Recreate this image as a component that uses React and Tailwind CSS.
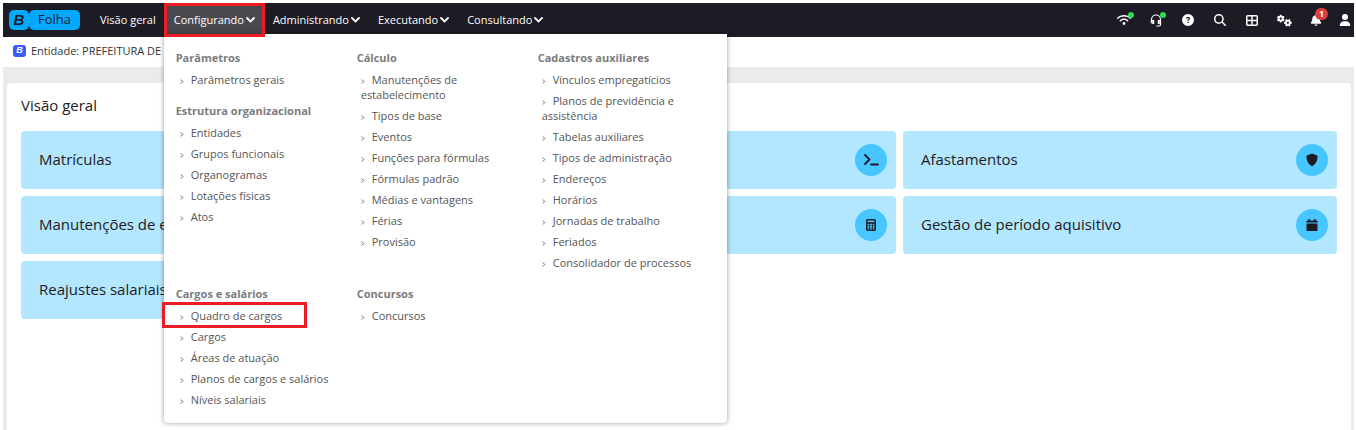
import { FaWifi, FaCircleQuestion, FaMagnifyingGlass, FaGears, FaBell, FaUser } from 'react-icons/fa6'

const menuColumns = [
  // first row
  [
    { title: 'Parâmetros', items: ['Parâmetros gerais'] },
    {
      title: 'Estrutura organizacional',
      items: ['Entidades', 'Grupos funcionais', 'Organogramas', 'Lotações físicas', 'Atos'],
    },
  ],
  [
    {
      title: 'Cálculo',
      items: [
        'Manutenções de estabelecimento',
        'Tipos de base',
        'Eventos',
        'Funções para fórmulas',
        'Fórmulas padrão',
        'Médias e vantagens',
        'Férias',
        'Provisão',
      ],
    },
  ],
  [
    {
      title: 'Cadastros auxiliares',
      items: [
        'Vínculos empregatícios',
        'Planos de previdência e assistência',
        'Tabelas auxiliares',
        'Tipos de administração',
        'Endereços',
        'Horários',
        'Jornadas de trabalho',
        'Feriados',
        'Consolidador de processos',
      ],
    },
  ],
  // second row
  [
    {
      title: 'Cargos e salários',
      items: ['Quadro de cargos', 'Cargos', 'Áreas de atuação', 'Planos de cargos e salários', 'Níveis salariais'],
    },
  ],
  [{ title: 'Concursos', items: ['Concursos'] }],
]

const TerminalIcon = () => (
  <svg viewBox="0 0 16 14" className="h-[14px] w-4" fill="none" stroke="currentColor" strokeWidth="1.8">
    <path d="M2 2l4.5 4.5L2 11M8 11.5h7" strokeLinecap="round" strokeLinejoin="round" />
  </svg>
)

const ShieldIcon = () => (
  <svg viewBox="0 0 12 14" className="h-[14px] w-3" fill="currentColor">
    <path d="M6 .5 11 2.4c.4.2.6.5.6.9C11.6 8 9.8 11.3 6 13.4 2.2 11.3.4 8 .4 3.300c0-.4.2-.7.6-.9z" />
  </svg>
)

const CalculatorIcon = () => (
  <svg viewBox="0 0 10 12" className="h-3 w-[10px]" fill="none" stroke="currentColor">
    <rect x=".75" y=".75" width="8.5" height="10.5" rx="1" strokeWidth="1.5" />
    <path d="M1 4h8" strokeWidth="1.6" />
    <path d="M3.5 4v7M6.5 4v7M1 6.5h8M1 9h8" strokeWidth=".7" />
  </svg>
)

const CalendarIcon = () => (
  <svg viewBox="0 0 12 14" className="h-[14px] w-3" fill="currentColor">
    <path d="M2.5 1h1.5v1.5h4V1h1.5v1.5h1c.6 0 1 .4 1 1v1H.5v-1c0-.6.4-1 1-1h1zM.5 5.5h11V12c0 .6-.4 1-1 1h-9c-.6 0-1-.4-1-1z" />
  </svg>
)

const GridIcon = () => (
  <svg viewBox="0 0 12 11" className="h-[11px] w-3" fill="none" stroke="currentColor" strokeWidth="1.5">
    <rect x=".75" y=".75" width="10.5" height="9.5" rx="1" />
    <path d="M6 1v9M1 5.5h10" />
  </svg>
)

const HeadsetIcon = () => (
  <svg viewBox="0 0 12 13" className="h-[13px] w-3" fill="none" stroke="currentColor">
    <path d="M1.5 8V5.5a4.5 4.5 0 0 1 9 0V10.5c0 .9-.6 1.5-1.5 1.5H6.5" strokeWidth="1.2" />
    <path d="M3.2 6v4M8.8 6v4" strokeWidth="2" />
    <path d="M1.2 6.5v3" strokeWidth="1" />
  </svg>
)

const tiles = [
  { label: 'Matrículas', icon: null },
  { label: '', icon: <TerminalIcon /> },
  { label: 'Afastamentos', icon: <ShieldIcon /> },
  { label: 'Manutenções de e', icon: null },
  { label: '', icon: <CalculatorIcon /> },
  { label: 'Gestão de período aquisitivo', icon: <CalendarIcon /> },
  { label: 'Reajustes salariais', icon: null },
]

const Chevron = () => (
  <svg viewBox="0 0 9 6" className="ml-[2px] h-[6px] w-[9px]" fill="none" stroke="currentColor" strokeWidth="1.8">
    <path d="M1 1l3.5 3.5L8 1" strokeLinecap="round" />
  </svg>
)

const MenuGroup = ({ title, items }) => (
  <section className="pb-4">
    <h2 className="mb-[6px] text-[11px] leading-4 font-bold text-[#7b7b7b]">{title}</h2>
    <ul className="flex flex-col gap-[6px] pl-1">
      {items.map((item) => (
        <li key={item} className="relative pr-5 text-[11px] leading-[15px] font-normal text-[#555]">
          <a href="#">
            <svg viewBox="0 0 4 5" className="mr-[7px] inline h-[5px] w-1 align-baseline" fill="none" stroke="#666">
              <path d="M.8.5l2 2-2 2" />
            </svg>
            {item}
          </a>
          {item === 'Quadro de cargos' && (
            <span className="pointer-events-none absolute -top-[6px] -left-[18px] h-[26px] w-[145px] border-3 border-[#ed1c24]" />
          )}
        </li>
      ))}
    </ul>
  </section>
)

const MegaMenu = () => (
  <div className="absolute top-[31px] -left-px z-20 grid w-[563px] grid-cols-3 rounded-b bg-white pt-4 pr-2 pl-3 shadow-[0_0_5px_rgba(0,0,0,0.4)]">
    {menuColumns.map((groups) => (
      <div key={groups[0].title}>
        {groups.map((group) => (
          <MenuGroup key={group.title} {...group} />
        ))}
      </div>
    ))}
  </div>
)

const NavButton = ({ children }) => (
  <button type="button" className="flex h-full items-center px-[9px] whitespace-nowrap">
    {children}
    <Chevron />
  </button>
)

const ToolButton = ({ label, children }) => (
  <button type="button" aria-label={label} className="relative flex h-full w-8 items-center justify-center">
    {children}
  </button>
)

const StatusDot = () => <span className="absolute top-[9px] right-[6px] size-[6px] rounded-full bg-[#2bdc56]" />

const Navbar = () => (
  <header className="flex h-[34px] items-center bg-[#1d1b24] text-[11px] font-medium text-white">
    <a href="#" className="ml-[6px] flex items-center text-[#1d1b24]">
      <span className="flex h-5 w-5 items-center justify-center rounded-[5px] bg-[#00a8ff] font-['Liberation_Sans',sans-serif] text-[15px] font-bold italic">
        B
      </span>
      <span className="flex h-5 w-[51px] items-center justify-center rounded-[5px] bg-[#00a8ff] text-[13px]">Folha</span>
    </a>

    <nav className="ml-[11px] flex h-full">
      <a href="#" className="flex items-center px-[9px] whitespace-nowrap">Visão geral</a>
      <div className="relative h-full bg-[#4a4950]">
        <NavButton>Configurando</NavButton>
        <MegaMenu />
        <span className="pointer-events-none absolute top-0 -right-px -left-px z-30 h-[34px] border-3 border-[#ed1c24]" />
      </div>
      <NavButton>Administrando</NavButton>
      <NavButton>Executando</NavButton>
      <NavButton>Consultando</NavButton>
    </nav>

    <div className="ml-auto flex h-full">
      <ToolButton label="Conexão">
        <FaWifi className="size-[14px]" />
        <StatusDot />
      </ToolButton>
      <ToolButton label="Suporte">
        <HeadsetIcon />
        <StatusDot />
      </ToolButton>
      <ToolButton label="Ajuda">
        <FaCircleQuestion className="size-3" />
      </ToolButton>
      <ToolButton label="Pesquisar">
        <FaMagnifyingGlass className="size-3" />
      </ToolButton>
      <ToolButton label="Aplicativos">
        <GridIcon />
      </ToolButton>
      <ToolButton label="Configurações">
        <FaGears className="size-[15px]" />
      </ToolButton>
      <ToolButton label="Notificações">
        <FaBell className="size-3" />
        <span className="absolute top-[5px] right-[4px] flex h-3 w-[13px] items-center justify-center rounded-full bg-[#e03c3c] text-[9px] font-bold">
          1
        </span>
      </ToolButton>
      <button type="button" aria-label="Usuário" className="flex w-[22px] items-center justify-end pr-[3px]">
        <FaUser className="size-3" />
      </button>
    </div>
  </header>
)

const App = () => {
  return (
    <div className="flex min-h-screen flex-col bg-white pt-[3px] pr-[2px] pl-[3px] font-['Open_Sans',sans-serif]">
      <Navbar />

      <div className="flex h-[30px] items-center gap-[5px] pb-[2px] pl-[10px] text-[11px] text-[#333]">
        <span className="flex h-3 w-[13px] items-center justify-center rounded-[3px] bg-[#3b5bfd] font-['Liberation_Sans',sans-serif] text-[9px] font-bold text-white italic">
          B
        </span>
        Entidade: PREFEITURA DE D
      </div>

      <main className="flex flex-1 flex-col bg-[#ebebeb] pt-4 pr-[3px] pl-1">
        <div className="flex-1 rounded-t bg-white px-[14px] pt-3">
          <h1 className="text-[15px] leading-5 text-[#222]">Visão geral</h1>
          <div className="mt-4 grid grid-cols-3 gap-[7px]">
            {tiles.map((tile, i) => (
              <a
                key={i}
                href="#"
                className="flex h-[58px] items-center justify-between rounded bg-[#b3e7ff] pr-[9px] pl-[18px] text-[15px] text-[#1d1b24]"
              >
                <span className="pb-[2px]">{tile.label}</span>
                {tile.icon && (
                  <span className="flex size-8 items-center justify-center rounded-full bg-[#48c6ff]">{tile.icon}</span>
                )}
              </a>
            ))}
          </div>
        </div>
      </main>
    </div>
  )
}

export default App
